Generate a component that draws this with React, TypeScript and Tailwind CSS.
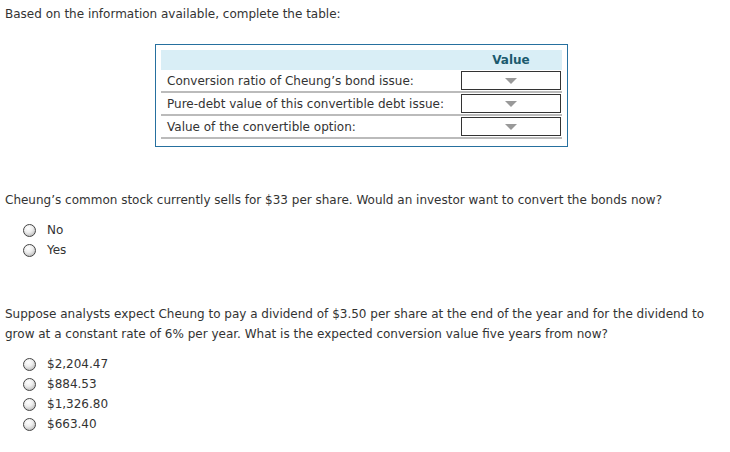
const rows = [
  "Conversion ratio of Cheung’s bond issue:",
  "Pure-debt value of this convertible debt issue:",
  "Value of the convertible option:",
];

const Radio = ({ label }: { label: string }) => (
  <div className="flex h-5 items-center">
    <span className="ml-[18px] mr-[11px] h-[13px] w-[13px] rounded-full border border-[#444] bg-[radial-gradient(circle_at_40%_30%,#ffffff_0%,#eeeeee_40%,#a8a8a8_100%)]" />
    <span>{label}</span>
  </div>
);

const Select = () => (
  <div className="flex h-[19px] w-[100px] items-center justify-center border border-[#333] bg-white">
    <svg width="12" height="6" viewBox="0 0 12 6">
      <polygon points="0,0 12,0 6,6" fill="#999" />
    </svg>
  </div>
);

export default function App() {
  return (
    <div className="min-h-[452px] bg-white pl-[5px] pt-[4px] text-[12px] leading-5 text-[#333] font-['DejaVu_Sans','Verdana',sans-serif]">
      <p>Based on the information available, complete the table:</p>

      <div className="ml-[150px] mt-[20px] w-[413px] border border-[#26709f] px-[5px] pb-[7px] pt-[5px]">
        <div className="flex h-5 items-center bg-[#d9eef6]">
          <div className="flex-1" />
          <div className="w-[101px] pr-[1px] text-center font-bold text-[#1b5a6e]">Value</div>
        </div>
        {rows.map((r) => (
          <div key={r} className="flex h-[23px] items-center border-b-2 border-[#bbb]">
            <div className="flex-1 pl-[6px]">{r}</div>
            <div className="flex w-[101px] justify-start pr-[1px]">
              <Select />
            </div>
          </div>
        ))}
      </div>

      <p className="mt-[43px]">
        Cheung’s common stock currently sells for $33 per share. Would an investor want to convert the bonds now?
      </p>
      <div className="mt-[10px]">
        <Radio label="No" />
        <Radio label="Yes" />
      </div>

      <p className="mt-[44px] pr-[10px]">
        Suppose analysts expect Cheung to pay a dividend of $3.50 per share at the end of the year and for the dividend to grow at a constant rate of 6% per year. What is the expected conversion value five years from now?
      </p>
      <div className="mt-[10px]">
        <Radio label="$2,204.47" />
        <Radio label="$884.53" />
        <Radio label="$1,326.80" />
        <Radio label="$663.40" />
      </div>
    </div>
  );
}
